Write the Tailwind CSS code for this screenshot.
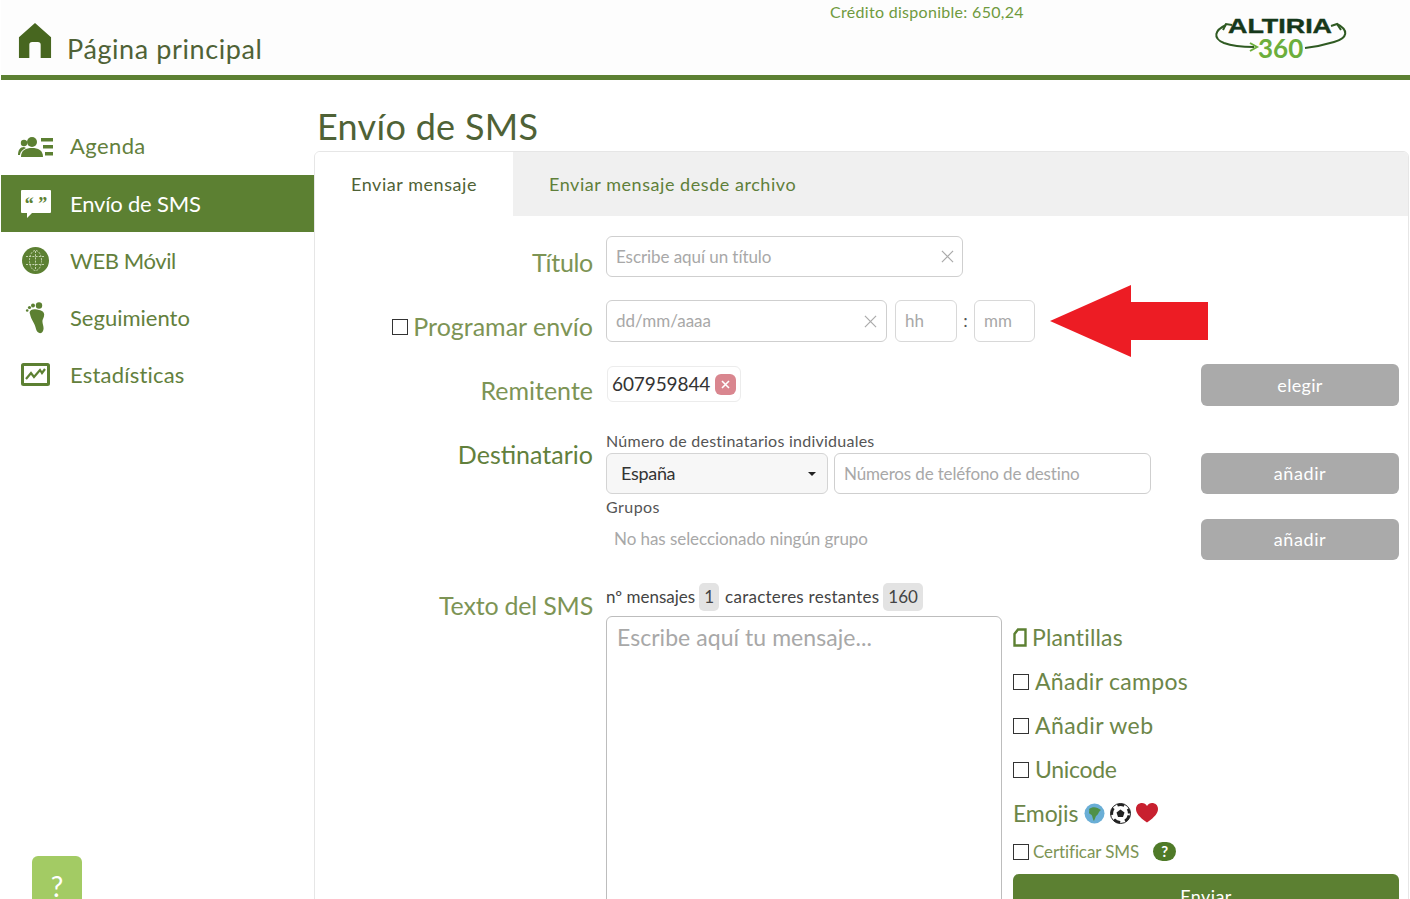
<!DOCTYPE html>
<html lang="es">
<head>
  <meta charset="UTF-8">
  <title>Envío de SMS</title>
  <script src="https://cdn.jsdelivr.net/npm/@tailwindcss/browser@4"></script>
</head>
<body class="bg-white h-[899px] overflow-hidden font-['Lato','Noto_Sans',sans-serif] text-[#5f7f3a] relative">

  <!-- cabecera -->
  <header class="ml-px h-[80px] border-b-[5px] border-[#5c8032] bg-[#fdfdfd] flex relative">
    <a class="flex items-start pl-[17px] pt-[23px] w-[800px]">
      <svg class="w-[34px] h-[36px]" viewBox="0 0 36 38"><path fill="#47661f" d="M18 0 L35 15 V37 H24 V23 a3 3 0 0 0 -3 -3 H15 a3 3 0 0 0 -3 3 V37 H1 V15 Z"/></svg>
      <span class="ml-[15px] mt-[9px] text-[27px] leading-[34px] tracking-[0.6px] text-[#4f6236]">Página principal</span>
    </a>
    <div class="w-[413px] pt-[2px] pl-[29px] text-[16px] leading-[20px] tracking-[0.3px] text-[#6f9a3e]">Crédito disponible: 650,24</div>
    <div class="relative w-[135px] h-[50px] mt-[14px]">
      <svg class="absolute inset-0 overflow-visible" width="135" height="50" viewBox="0 0 135 50" fill="none" stroke="#2f5a22" stroke-width="2">
        <path d="M12 11 C 1 16, -2 24, 10 29 C 18 32, 28 33, 40 33"/>
        <path d="M36 29 L43 33 L36 37" stroke="#6cae3c"/>
        <path d="M9 16 L12 10 L18 11"/>
        <path d="M123 10 C 135 16, 134 24, 120 28 C 110 31, 100 33, 91 34"/>
        <path d="M127 16 L123 10 L117 12"/>
      </svg>
      <span class="absolute left-[14px] top-[0px] origin-left scale-x-[1.28] font-['Liberation_Sans',sans-serif] font-bold text-[21px] leading-[24px] [-webkit-text-stroke:0.4px_#16381a] text-[#16381a]">ALTIRIA</span>
      <span class="absolute left-[44px] top-[20px] font-['Lato',sans-serif] font-bold text-[26px] leading-[28px] text-[#6cae3c]">360</span>
    </div>
  </header>

  <div class="flex pl-px">
    <!-- menú lateral -->
    <nav class="w-[313px] pt-[38px] shrink-0 text-[22px] text-[#63803c]">
      <a class="h-[57px] flex items-center pl-[17px] gap-[17px]">
        <svg class="w-[35px] h-[20px] shrink-0" viewBox="0 0 35 20" fill="#5c8032"><circle cx="14" cy="5" r="5"/><path d="M3 20 c0-7 5-9 11-9 s11 2 11 9z"/><circle cx="6" cy="6" r="3.2"/><path d="M0 18 c0-5 2-8 6-8 l2 1 c-4 2-6 4-6 7z"/><rect x="23" y="1" width="12" height="3.5"/><rect x="25" y="8" width="10" height="3.5"/><rect x="27" y="15" width="8" height="3.5"/></svg>
        <span class="-mt-[2px] tracking-[0.4px]">Agenda</span>
      </a>
      <a class="h-[57px] flex items-center pl-[20px] gap-[19px] bg-[#5c8032] text-white">
        <svg class="w-[30px] h-[28px] shrink-0" viewBox="0 0 30 28"><path fill="#fff" d="M1 0 H29 a1 1 0 0 1 1 1 V22 a1 1 0 0 1 -1 1 H11 L6 28 V23 H1 a1 1 0 0 1 -1 -1 V1 a1 1 0 0 1 1 -1Z"/><text x="15" y="20" text-anchor="middle" font-family="Liberation Serif" font-weight="700" font-size="18" fill="#5c8032">“ ”</text></svg>
        <span class="tracking-[-0.2px]">Envío de SMS</span>
      </a>
      <a class="h-[57px] flex items-center pl-[21px] gap-[21px]">
        <svg class="w-[27px] h-[27px] shrink-0" viewBox="0 0 27 27"><circle cx="13.5" cy="13.5" r="13.5" fill="#5c8032"/><g fill="none" stroke="#c5d4b0" stroke-width="1" stroke-dasharray="2 1.2"><ellipse cx="13.5" cy="13.5" rx="6" ry="10"/><path d="M4 9.5 H23 M4 17.5 H23 M13.5 4 V23"/></g></svg>
        <span class="tracking-[-0.4px]">WEB Móvil</span>
      </a>
      <a class="h-[57px] flex items-center pl-[24px] gap-[23px]">
        <svg class="w-[22px] h-[32px] shrink-0" viewBox="0 0 22 32" fill="#5c8032"><path d="M5 12 C 3 8, 9 6, 14 8 C 20 9, 20 13, 18 17 C 16 20, 20 25, 18 29 C 16 33, 12 31, 11 27 C 10 21, 6 18, 5 12Z"/><circle cx="14" cy="3.5" r="3.2"/><circle cx="8" cy="3.5" r="2"/><circle cx="4.5" cy="5.5" r="1.6"/><circle cx="2.2" cy="8.5" r="1.3"/></svg>
        <span>Seguimiento</span>
      </a>
      <a class="h-[57px] flex items-center pl-[20px] gap-[20px]">
        <svg class="w-[29px] h-[23px] shrink-0" viewBox="0 0 29 23"><rect x="1.5" y="1.5" width="26" height="20" rx="1" fill="none" stroke="#5c8032" stroke-width="3"/><path d="M5 16 L10 10 L13 14 L19 7 L21 10 L24 6" fill="none" stroke="#5c8032" stroke-width="2.2"/></svg>
        <span class="tracking-[0.2px]">Estadísticas</span>
      </a>
    </nav>

    <!-- contenido -->
    <main class="flex-1 pr-px">
      <h1 class="text-[36px] leading-[44px] pt-[24px] pl-[3px] tracking-[0.3px] text-[#4f6236]">Envío de SMS</h1>
      <section class="mt-[3px] border border-[#e6e6e6] rounded-t-[6px] h-[760px] overflow-hidden">
        <div class="flex h-[64px] bg-[#f0f0f0] text-[18px] tracking-[0.55px]">
          <div class="w-[198px] bg-white flex items-center justify-center text-[#4f6236]">Enviar mensaje</div>
          <div class="pl-[36px] flex items-center text-[#5f7f3a]">Enviar mensaje desde archivo</div>
        </div>

        <div class="pt-[20px] pl-[13px] pr-[9px] text-[25px]">
          <!-- Título -->
          <div class="flex h-[41px]">
            <label class="w-[265px] text-right text-[#7d9455] pt-[7px] leading-[38px] tracking-[-0.3px]">Título</label>
            <div class="ml-[13px] w-[357px] h-[41px] border border-[#cfcfcf] rounded-[6px] flex items-center justify-between pl-[9px] pr-[8px] text-[17px] tracking-[-0.07px] text-[#a8a8a8]">
              <span>Escribe aquí un título</span>
              <svg class="w-[13px] h-[13px]" viewBox="0 0 14 14" stroke="#ababab" stroke-width="1.3"><path d="M1 1 L13 13 M13 1 L1 13"/></svg>
            </div>
          </div>

          <!-- Programar envío -->
          <div class="flex h-[42px] mt-[23px]">
            <label class="w-[265px] flex justify-end text-[#7d9455] pt-[7px] leading-[38px]">
              <span class="w-[16px] h-[16px] border border-[#333] mt-[12px] mr-[5px] bg-white"></span>Programar envío
            </label>
            <div class="ml-[13px] w-[281px] h-[42px] border border-[#cfcfcf] rounded-[6px] flex items-center justify-between pl-[9px] pr-[9px] text-[17px] text-[#a8a8a8]">
              <span>dd/mm/aaaa</span>
              <svg class="w-[13px] h-[13px]" viewBox="0 0 14 14" stroke="#ababab" stroke-width="1.3"><path d="M1 1 L13 13 M13 1 L1 13"/></svg>
            </div>
            <div class="ml-[8px] w-[62px] h-[42px] border border-[#d8d8d8] rounded-[6px] flex items-center px-[9px] text-[17px] text-[#a8a8a8]">hh</div>
            <div class="w-[17px] text-center text-[18px] leading-[40px] text-[#555]">:</div>
            <div class="w-[61px] h-[42px] border border-[#d8d8d8] rounded-[6px] flex items-center px-[9px] text-[17px] text-[#a8a8a8]">mm</div>
            <svg class="ml-[15px] -mt-[15px] shrink-0" width="159" height="72" viewBox="0 0 159 72"><path fill="#ed1c24" d="M0 36 L81 0 V17 H158 V55 H81 V72 Z"/></svg>
          </div>

          <!-- Remitente -->
          <div class="flex h-[42px] mt-[22px]">
            <label class="w-[265px] text-right text-[#7d9455] pt-[7px] leading-[38px]">Remitente</label>
            <div class="ml-[14px] mt-[2px] w-[134px] h-[36px] border border-[#ececec] rounded-[6px] flex items-center pl-[4px] text-[19px] tracking-[-0.1px] text-[#333]">
              <span>607959844</span>
              <span class="ml-[5px] w-[21px] h-[21px] shrink-0 rounded-[6px] bg-[#d9868f] flex items-center justify-center">
                <svg class="w-[9px] h-[9px]" viewBox="0 0 9 9" stroke="#fff" stroke-width="1.6"><path d="M1 1 L8 8 M8 1 L1 8"/></svg>
              </span>
            </div>
            <button class="ml-auto w-[198px] h-[42px] rounded-[6px] bg-[#aaaaaa] text-white text-[18px] tracking-[0.3px]">elegir</button>
          </div>

          <!-- Destinatario -->
          <div class="flex mt-[25px]">
            <label class="w-[265px] text-right text-[#62803c] leading-[38px] mt-[4px] h-[38px]">Destinatario</label>
            <div class="ml-[13px] flex-1">
              <div class="text-[16px] leading-[20px] h-[20px] tracking-[0.25px] text-[#555]">Número de destinatarios individuales</div>
              <div class="flex h-[41px] mt-[2px]">
                <div class="w-[222px] h-[41px] border border-[#d4d4d4] rounded-[6px] bg-[#f7f7f7] flex items-center justify-between pl-[14px] pr-[11px] text-[18px] tracking-[-0.3px] text-[#333]">
                  <span>España</span>
                  <span class="w-0 h-0 border-x-[4px] border-x-transparent border-t-[4px] border-t-[#222]"></span>
                </div>
                <div class="ml-[6px] w-[317px] h-[41px] border border-[#cfcfcf] rounded-[6px] flex items-center px-[9px] text-[17px] tracking-[-0.15px] text-[#a8a8a8]">Números de teléfono de destino</div>
                <button class="ml-auto w-[198px] h-[41px] rounded-[6px] bg-[#aaaaaa] text-white text-[18px] tracking-[0.6px]">añadir</button>
              </div>
              <div class="flex h-[66px]">
                <div>
                  <div class="text-[16px] leading-[20px] pt-[3px] h-[25px] tracking-[0.45px] text-[#555]">Grupos</div>
                  <div class="pl-[8px] pt-[8px] text-[17px] leading-[24px] tracking-[-0.06px] text-[#a8a8a8]">No has seleccionado ningún grupo</div>
                </div>
                <button class="ml-auto mt-[25px] w-[198px] h-[41px] rounded-[6px] bg-[#aaaaaa] text-white text-[18px] tracking-[0.6px]">añadir</button>
              </div>
            </div>
          </div>

          <!-- Texto del SMS -->
          <div class="flex mt-[23px]">
            <label class="w-[265px] text-right text-[#7d9455] leading-[38px] mt-[3px] h-[38px] tracking-[-0.2px]">Texto del SMS</label>
            <div class="ml-[13px] flex-1">
              <div class="flex items-center h-[28px] text-[17px] text-[#444]">
                <span>nº mensajes</span>
                <span class="ml-[4px] px-[5px] h-[28px] leading-[28px] rounded-[5px] bg-[#e3e3e3]">1</span>
                <span class="ml-[6px] tracking-[0.25px]">caracteres restantes</span>
                <span class="ml-[4px] px-[5px] h-[28px] leading-[28px] rounded-[5px] bg-[#e3e3e3]">160</span>
              </div>
              <div class="flex mt-[5px]">
                <div class="w-[396px] h-[320px] shrink-0 border border-[#bdbdbd] rounded-[6px] px-[10px] pt-[4px] text-[23px] leading-[32px] tracking-[0.05px] text-[#a8a8a8]">Escribe aquí tu mensaje...</div>
                <div class="ml-[11px] -mt-px flex-1 text-[23px] text-[#6c8648]">
                  <div class="flex items-center h-[44px] tracking-[0.15px]">
                    <svg class="w-[14px] h-[19px] mr-[5px]" viewBox="0 0 14 19" fill="none" stroke="#5c8032" stroke-width="2.4"><path d="M5 1.5 H12.5 V17.5 H1.5 V6 Z"/></svg>
                    Plantillas
                  </div>
                  <div class="flex items-center h-[44px] tracking-[0.3px]"><span class="w-[16px] h-[16px] mt-[2px] border border-[#333] mr-[6px]"></span>Añadir campos</div>
                  <div class="flex items-center h-[44px] tracking-[0.4px]"><span class="w-[16px] h-[16px] mt-[2px] border border-[#333] mr-[6px]"></span>Añadir web</div>
                  <div class="flex items-center h-[44px] tracking-[-0.3px]"><span class="w-[16px] h-[16px] mt-[2px] border border-[#333] mr-[6px]"></span>Unicode</div>
                  <div class="flex items-center h-[44px] tracking-[-0.1px]">
                    <span>Emojis</span>
                    <svg class="ml-[6px] w-[21px] h-[21px]" viewBox="0 0 21 21"><circle cx="10.5" cy="10.5" r="10" fill="#6aaed6"/><path d="M5 6 C 9 3, 13 4, 17 7 C 14 9, 15 11, 12 13 L10 18 C 8 15, 9 12, 6 11 C 4 10, 6 8, 5 6Z" fill="#4f9148"/></svg>
                    <svg class="ml-[5px] w-[21px] h-[21px]" viewBox="0 0 21 21"><circle cx="10.5" cy="10.5" r="10" fill="#fff" stroke="#222" stroke-width="1"/><circle cx="10.5" cy="10.5" r="8.7" fill="none" stroke="#222" stroke-width="2.6" stroke-dasharray="7 4.9" stroke-dashoffset="10"/><path d="M10.5 6.5 L14.5 9.4 L13 14 H8 L6.5 9.4Z" fill="#222"/></svg>
                    <svg class="ml-[5px] w-[22px] h-[20px]" viewBox="0 0 22 20"><path fill="#c8202f" d="M11 19.5 C 3 14, 0 10, 0 6 C 0 2, 3 0, 6 0 C 8 0, 10 1, 11 3 C 12 1, 14 0, 16 0 C 19 0, 22 2, 22 6 C 22 10, 19 14, 11 19.5Z"/></svg>
                  </div>
                  <div class="flex items-center h-[33px] text-[17px] tracking-[-0.1px] text-[#7d9455]">
                    <span class="w-[16px] h-[16px] border border-[#333] mr-[4px]"></span>Certificar SMS
                    <span class="ml-[14px] w-[23px] h-[19px] rounded-full bg-[#4f7a28] text-white text-[15px] font-bold leading-[19px] text-center">?</span>
                  </div>
                  <button class="mt-[6px] block w-[386px] h-[44px] rounded-[6px] bg-[#5c8032] text-white text-[18px] leading-[40px] tracking-[0.4px]">Enviar</button>
                </div>
              </div>
            </div>
          </div>
        </div>
      </section>
    </main>
  </div>

  <!-- ayuda -->
  <div class="absolute left-[32px] top-[856px] w-[50px] h-[60px] rounded-[6px] bg-[#a3cb64] text-white text-[28px] leading-[60px] text-center">?</div>
</body>
</html>
